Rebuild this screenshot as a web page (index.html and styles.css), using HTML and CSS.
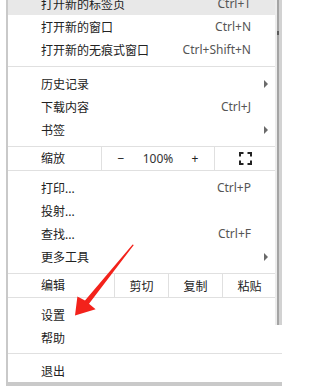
FILE: index.html
```html
<!DOCTYPE html>
<html lang="zh-CN">
<head>
<meta charset="utf-8">
<title>菜单</title>
<link rel="stylesheet" href="styles.css">
</head>
<body>
<div class="page">
  <div class="menu">
    <div class="section">
      <div class="item hover"><span class="label">打开新的标签页</span><span class="key">Ctrl+T</span><span class="sub"></span></div>
      <div class="item"><span class="label">打开新的窗口</span><span class="key">Ctrl+N</span><span class="sub"></span></div>
      <div class="item"><span class="label">打开新的无痕式窗口</span><span class="key">Ctrl+Shift+N</span><span class="sub"></span></div>
    </div>
    <div class="section">
      <div class="item"><span class="label">历史记录</span><span class="key"></span><span class="sub on"></span></div>
      <div class="item"><span class="label">下载内容</span><span class="key">Ctrl+J</span><span class="sub"></span></div>
      <div class="item"><span class="label">书签</span><span class="key"></span><span class="sub on"></span></div>
    </div>
    <div class="row zoom">
      <span class="rlabel">缩放</span>
      <div class="cell ctrl"><span class="btn">−</span><span class="pct">100%</span><span class="btn">+</span></div>
      <div class="cell full">
        <svg class="fs" width="13" height="13" viewBox="0 0 13 13"><path d="M1 4.5V1h3.5M8.5 1H12v3.5M12 8.5V12H8.5M4.5 12H1V8.5" fill="none" stroke="#222" stroke-width="2"/></svg>
      </div>
    </div>
    <div class="section">
      <div class="item"><span class="label">打印...</span><span class="key">Ctrl+P</span><span class="sub"></span></div>
      <div class="item"><span class="label">投射...</span><span class="key"></span><span class="sub"></span></div>
      <div class="item"><span class="label">查找...</span><span class="key">Ctrl+F</span><span class="sub"></span></div>
      <div class="item"><span class="label">更多工具</span><span class="key"></span><span class="sub on"></span></div>
    </div>
    <div class="row edit">
      <span class="rlabel">编辑</span>
      <div class="cell">剪切</div>
      <div class="cell">复制</div>
      <div class="cell">粘贴</div>
    </div>
    <div class="section tight">
      <div class="item"><span class="label">设置</span><span class="key"></span><span class="sub"></span></div>
      <div class="item"><span class="label">帮助</span><span class="key"></span><span class="sub"></span></div>
    </div>
    <div class="section last">
      <div class="item"><span class="label">退出</span><span class="key"></span><span class="sub"></span></div>
    </div>
  </div>
  <div class="scrollbar"><span class="mark"></span></div>
  <svg class="annotation" width="288" height="386" viewBox="0 0 288 386">
    <polygon points="133.8,245 89,303.8 95.6,309.2 75,315.5 77.4,296.4 85,300.6 132.6,244.6" fill="#f3221b"/>
  </svg>
</div>
</body>
</html>
```
FILE: styles.css
```css
* { box-sizing: border-box; }
html, body { margin: 0; padding: 0; background: #fff; }
body {
  font-family: "Noto Sans", "Noto Sans CJK SC", sans-serif;
  font-size: 12px;
  color: #222;
}
.page {
  position: relative;
  width: 288px;
  height: 386px;
  overflow: hidden;
}
.menu {
  margin-top: -13px;
  margin-left: 6px;
  width: 276px;
  border-left: 2px solid #c9c9c9;
  border-bottom: 4px solid #c9c9c9;
  background: #fff;
}
.section {
  padding: 5px 0;
  border-top: 1px solid #e0e0e0;
}
.section:first-child { border-top: 0; }
.section.tight { padding-bottom: 4px; }
.section.last { padding-bottom: 0; }
.item {
  display: grid;
  grid-template-columns: 1fr auto 17px;
  align-items: center;
  height: 23px;
  padding-left: 33px;
  padding-right: 14px;
  white-space: nowrap;
}
.item.hover { background: #e8e8e8; }
.key { color: #555; }
.sub { justify-self: end; width: 4px; height: 8px; }
.sub.on {
  width: 0;
  height: 0;
  border-left: 4px solid #6a6a6a;
  border-top: 4px solid transparent;
  border-bottom: 4px solid transparent;
}
.row {
  display: flex;
  height: 24px;
  border-top: 1px solid #e0e0e0;
}
.rlabel {
  padding-left: 33px;
  line-height: 23px;
}
.cell {
  border-left: 1px solid #e0e0e0;
  display: flex;
  align-items: center;
  justify-content: center;
}
.zoom .rlabel { width: 93px; }
.zoom .ctrl { width: 113px; justify-content: space-between; }
.btn { width: 38px; text-align: center; }
.pct { color: #333; }
.zoom .full { width: 62px; }
.edit .rlabel { width: 106px; }
.edit .cell { width: 54px; }
.scrollbar {
  position: absolute;
  top: 0;
  left: 275px;
  width: 7px;
  height: 325px;
  background: linear-gradient(to right, #ececec 0 2px, #a4a4a4 2px 4px, #d2d2d2 4px 7px);
}
.mark {
  position: absolute;
  left: 2px;
  top: 31px;
  width: 2px;
  height: 4px;
  background: #5a5a5a;
}
.annotation {
  position: absolute;
  top: 0;
  left: 0;
  pointer-events: none;
}
```
